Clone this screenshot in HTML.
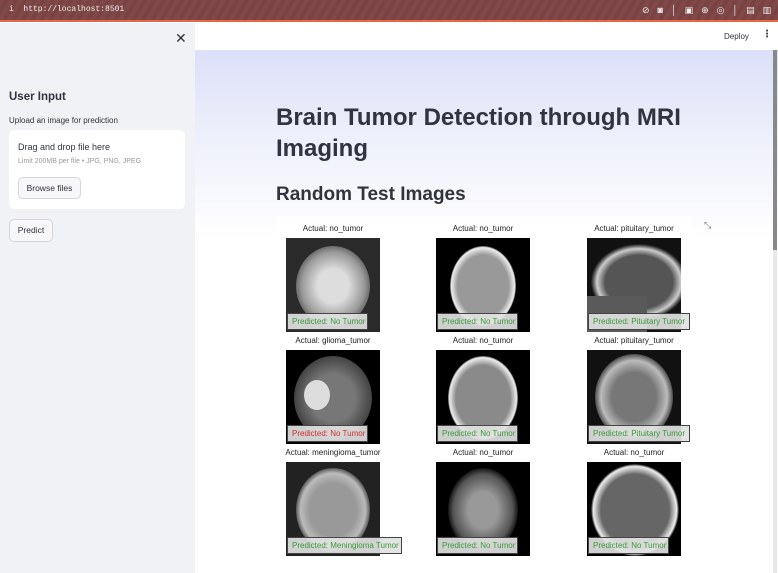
<!DOCTYPE html>
<html><head><meta charset="utf-8"><style>
*{margin:0;padding:0;box-sizing:border-box}
body{width:778px;height:573px;overflow:hidden;font-family:"Liberation Sans","DejaVu Sans",sans-serif;background:#fff;position:relative}
.a{position:absolute}
.top{left:0;top:0;width:778px;height:22px;background:repeating-linear-gradient(-60deg,#814848 0 4px,#7a4343 4px 8px);border-bottom:2px solid #e8664a}
.side{left:0;top:23px;width:195px;height:550px;background:#f0f2f6}
.main{left:195px;top:50px;width:583px;height:523px;background:linear-gradient(180deg,#dcdff8 0,#eef0fb 90px,#fff 190px)}
.hdr{left:195px;top:23px;width:583px;height:27px;background:#fff}
.cap{font-size:8px;color:#222;text-align:center;width:140px}
.img{width:94px;height:94px;background:#111;overflow:hidden}
.lab{height:17px;background:rgba(225,225,225,.92);border:1px solid #444;font-size:8px;line-height:15px;padding-left:4px;color:#3a9a3a;white-space:nowrap}
.el{position:absolute;border-radius:50%}
</style></head><body>
<div class="a top"></div>
<div class="a" style="left:9px;top:5px;color:#eee;font-size:8px;font-family:'Liberation Mono',monospace">i&nbsp;&nbsp;http://localhost:8501</div>
<div class="a" style="left:642px;top:5px;color:#eee;font-size:9px;letter-spacing:8px">⊘◙│▣⊕◎│▤▥</div>
<div class="a side"></div>
<div class="a" style="left:175px;top:30px;font-size:14px;color:#333">✕</div>
<div class="a" style="left:9px;top:91px;font-size:11.5px;font-weight:bold;color:#31333f">User Input</div>
<div class="a" style="left:9px;top:116px;font-size:8px;color:#31333f">Upload an image for prediction</div>
<div class="a" style="left:9px;top:130px;width:176px;height:79px;background:#fff;border-radius:6px"></div>
<div class="a" style="left:18px;top:142px;font-size:9px;color:#31333f">Drag and drop file here</div>
<div class="a" style="left:18px;top:158px;font-size:7px;color:#999">Limit 200MB per file • JPG, PNG, JPEG</div>
<div class="a" style="left:18px;top:177px;width:63px;height:22px;border:1px solid #d5d6dc;border-radius:5px;background:#f7f7f9;font-size:8.5px;line-height:20px;text-align:center;color:#31333f">Browse files</div>
<div class="a" style="left:9px;top:219px;width:44px;height:23px;border:1px solid #d5d6dc;border-radius:5px;background:#f7f7f9;font-size:8.5px;line-height:21px;text-align:center;color:#31333f">Predict</div>
<div class="a hdr"></div>
<div class="a" style="left:724px;top:32px;font-size:8px;color:#31333f">Deploy</div>
<div class="a" style="left:762px;top:29px;font-size:10px;color:#31333f;font-weight:bold">⋮</div>
<div class="a main"></div>
<div class="a" style="left:773px;top:50px;width:4px;height:523px;background:#e8e8e8"></div>
<div class="a" style="left:773px;top:50px;width:4px;height:200px;background:#888"></div>
<div class="a" style="left:276px;top:102px;font-size:24px;font-weight:bold;color:#31333f;line-height:31px;width:440px">Brain Tumor Detection through MRI Imaging</div>
<div class="a" style="left:276px;top:184px;font-size:19px;font-weight:bold;color:#31333f">Random Test Images</div>
<div class="a" style="left:276px;top:217px;width:416px;height:345px;background:#fff"></div>
<div class="a" style="left:704px;top:220px;font-size:9px;color:#777">⤡</div>

<!-- row 1 -->
<div class="a cap" style="left:263px;top:224px">Actual: no_tumor</div>
<div class="a cap" style="left:413px;top:224px">Actual: no_tumor</div>
<div class="a cap" style="left:564px;top:224px">Actual: pituitary_tumor</div>
<div class="a img" style="left:286px;top:238px;background:#2a2a2a"><div class="el" style="left:10px;top:8px;width:74px;height:80px;background:radial-gradient(#ddd 30%,#999 60%,#444 80%)"></div></div>
<div class="a img" style="left:436px;top:238px;background:#000"><div class="el" style="left:14px;top:8px;width:66px;height:80px;background:radial-gradient(#999 55%,#eee 68%,#000 72%)"></div></div>
<div class="a img" style="left:587px;top:238px;background:#111"><div class="el" style="left:4px;top:6px;width:96px;height:76px;background:radial-gradient(#555 50%,#ccc 62%,#222 70%)"></div><div class="a" style="left:0;top:58px;width:60px;height:36px;background:#5a5a5a"></div></div>
<div class="a lab" style="left:287px;top:313px;width:81px">Predicted: No Tumor</div>
<div class="a lab" style="left:437px;top:313px;width:81px">Predicted: No Tumor</div>
<div class="a lab" style="left:588px;top:313px;width:102px">Predicted: Pituitary Tumor</div>

<!-- row 2 -->
<div class="a cap" style="left:263px;top:336px">Actual: glioma_tumor</div>
<div class="a cap" style="left:413px;top:336px">Actual: no_tumor</div>
<div class="a cap" style="left:564px;top:336px">Actual: pituitary_tumor</div>
<div class="a img" style="left:286px;top:350px;background:#000"><div class="el" style="left:8px;top:6px;width:78px;height:84px;background:radial-gradient(#777 40%,#444 70%,#000 74%)"></div><div class="el" style="left:18px;top:30px;width:26px;height:30px;background:#ddd"></div></div>
<div class="a img" style="left:436px;top:350px;background:#000"><div class="el" style="left:12px;top:6px;width:70px;height:84px;background:radial-gradient(#8a8a8a 55%,#eee 68%,#000 72%)"></div></div>
<div class="a img" style="left:587px;top:350px;background:#111"><div class="el" style="left:8px;top:4px;width:78px;height:86px;background:radial-gradient(#777 40%,#bbb 60%,#222 75%)"></div></div>
<div class="a lab" style="left:287px;top:425px;width:81px;color:#d03030">Predicted: No Tumor</div>
<div class="a lab" style="left:437px;top:425px;width:81px">Predicted: No Tumor</div>
<div class="a lab" style="left:588px;top:425px;width:102px">Predicted: Pituitary Tumor</div>

<!-- row 3 -->
<div class="a cap" style="left:263px;top:448px">Actual: meningioma_tumor</div>
<div class="a cap" style="left:413px;top:448px">Actual: no_tumor</div>
<div class="a cap" style="left:564px;top:448px">Actual: no_tumor</div>
<div class="a img" style="left:286px;top:462px;background:#222"><div class="el" style="left:10px;top:6px;width:74px;height:84px;background:radial-gradient(#999 45%,#bbb 62%,#333 74%)"></div></div>
<div class="a img" style="left:436px;top:462px;background:#000"><div class="el" style="left:12px;top:6px;width:70px;height:84px;background:radial-gradient(#999 30%,#555 60%,#000 74%)"></div></div>
<div class="a img" style="left:587px;top:462px;background:#000"><div class="el" style="left:4px;top:2px;width:88px;height:92px;background:radial-gradient(#666 55%,#eee 67%,#000 71%)"></div></div>
<div class="a lab" style="left:287px;top:537px;width:115px">Predicted: Meningioma Tumor</div>
<div class="a lab" style="left:437px;top:537px;width:81px">Predicted: No Tumor</div>
<div class="a lab" style="left:588px;top:537px;width:81px">Predicted: No Tumor</div>
</body></html>
